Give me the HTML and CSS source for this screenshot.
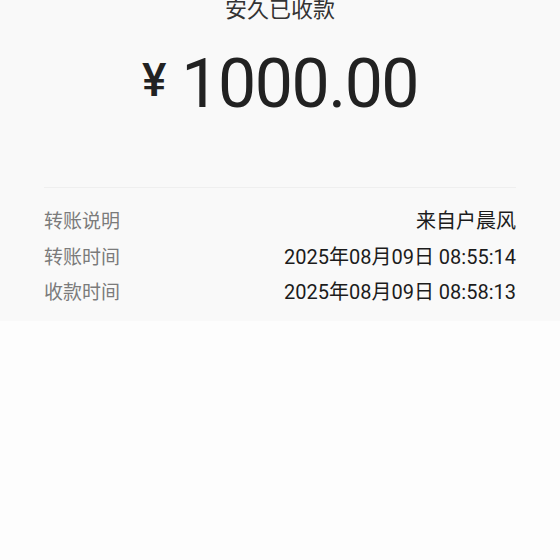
FILE: index.html
```html
<!DOCTYPE html>
<html lang="zh-CN">
<head>
<meta charset="UTF-8">
<meta name="viewport" content="width=device-width, initial-scale=1.0">
<title>已收款</title>
<link rel="stylesheet" href="styles.css">
</head>
<body>
<div class="receipt">
    <div class="status">安久已收款</div>
    <div class="amount">
        <span class="currency">¥</span><span class="value">1000.00</span>
    </div>
    <div class="details">
        <div class="row">
            <span class="label">转账说明</span>
            <span class="info">来自户晨风</span>
        </div>
        <div class="row">
            <span class="label">转账时间</span>
            <span class="info">2025年08月09日 08:55:14</span>
        </div>
        <div class="row">
            <span class="label">收款时间</span>
            <span class="info">2025年08月09日 08:58:13</span>
        </div>
    </div>
</div>
</body>
</html>
```

FILE: styles.css
```css
body {
    margin: 0;
    background-color: #fdfdfd;
    font-family: Roboto, "Noto Sans CJK SC", sans-serif;
    overflow: hidden;
}

.receipt {
    background-color: #f9f9f9;
    padding: 0 44px 10px;
}

.status {
    margin-top: -4px;
    text-align: center;
    font-size: 22px;
    line-height: 28px;
    color: #333;
}

.amount {
    display: flex;
    justify-content: center;
    align-items: flex-start;
    margin-top: 22px;
    height: 100px;
    color: #222;
}

.currency {
    font-size: 46px;
    line-height: 44px;
    font-weight: 500;
    margin-top: 12px;
    margin-right: 15px;
}

.value {
    font-size: 68px;
    line-height: 76px;
    letter-spacing: -1.5px;
}

.details {
    border-top: 1px solid #efefef;
    margin-top: 41px;
    padding-top: 16px;
}

.row {
    display: flex;
    justify-content: space-between;
    align-items: baseline;
    line-height: 34.5px;
}

.label {
    font-size: 19px;
    color: #7b7b7b;
}

.info {
    font-size: 20px;
    color: #1c1c1c;
}
```
